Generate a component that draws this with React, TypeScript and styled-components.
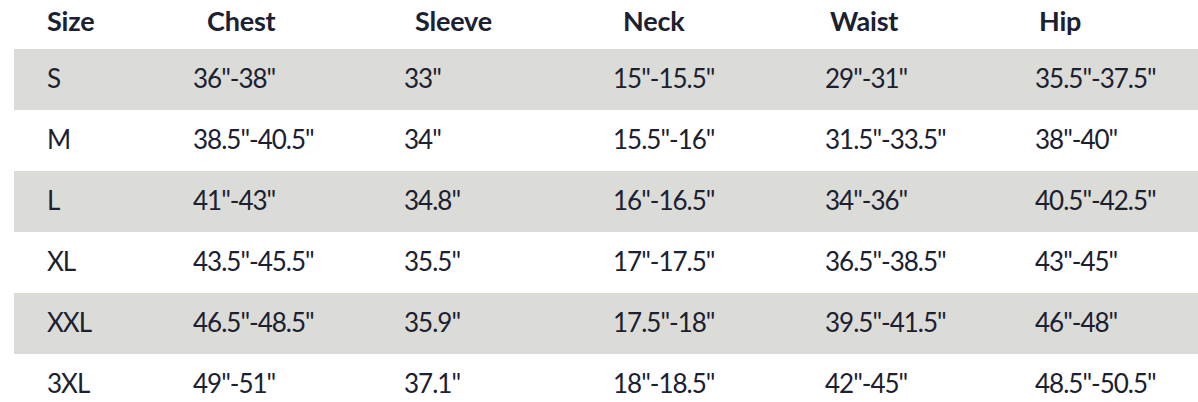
import React from "react";
import styled, { createGlobalStyle } from "styled-components";

const GlobalStyle = createGlobalStyle`
  body {
    margin: 0;
    background: #ffffff;
    font-family: Lato, "Open Sans", sans-serif;
    color: #1b2131;
  }
`;

const Chart = styled.div`
  margin-left: 14px;
  width: 1184px;
`;

const Row = styled.div<{ $cols: string; $shaded?: boolean; $height: number }>`
  display: grid;
  grid-template-columns: ${(p) => p.$cols};
  align-items: center;
  height: ${(p) => p.$height}px;
  padding-left: 33px;
  background: ${(p) => (p.$shaded ? "#dbdbd7" : "transparent")};
`;

const HeadCell = styled.div`
  font-size: 27px;
  font-weight: 700;
  letter-spacing: -0.2px;
  padding-bottom: 9px;
`;

const Cell = styled.div`
  font-size: 26px;
  font-weight: 400;
  letter-spacing: -1px;
  padding-bottom: 3px;
`;

const headCols = "160px 208px 208px 207px 209px 1fr";
const bodyCols = "146px 211px 209px 212px 210px 1fr";

const headers = ["Size", "Chest", "Sleeve", "Neck", "Waist", "Hip"];

const sizes = [
  ["S", "36\"-38\"", "33\"", "15\"-15.5\"", "29\"-31\"", "35.5\"-37.5\""],
  ["M", "38.5\"-40.5\"", "34\"", "15.5\"-16\"", "31.5\"-33.5\"", "38\"-40\""],
  ["L", "41\"-43\"", "34.8\"", "16\"-16.5\"", "34\"-36\"", "40.5\"-42.5\""],
  ["XL", "43.5\"-45.5\"", "35.5\"", "17\"-17.5\"", "36.5\"-38.5\"", "43\"-45\""],
  ["XXL", "46.5\"-48.5\"", "35.9\"", "17.5\"-18\"", "39.5\"-41.5\"", "46\"-48\""],
  ["3XL", "49\"-51\"", "37.1\"", "18\"-18.5\"", "42\"-45\"", "48.5\"-50.5\""],
];

const App = () => (
  <>
    <GlobalStyle />
    <Chart>
      <Row $cols={headCols} $height={49}>
        {headers.map((h) => (
          <HeadCell key={h}>{h}</HeadCell>
        ))}
      </Row>
      {sizes.map((row, i) => (
        <Row key={row[0]} $cols={bodyCols} $height={61} $shaded={i % 2 === 0}>
          {row.map((value, j) => (
            <Cell key={j}>{value}</Cell>
          ))}
        </Row>
      ))}
    </Chart>
  </>
);

export default App;
